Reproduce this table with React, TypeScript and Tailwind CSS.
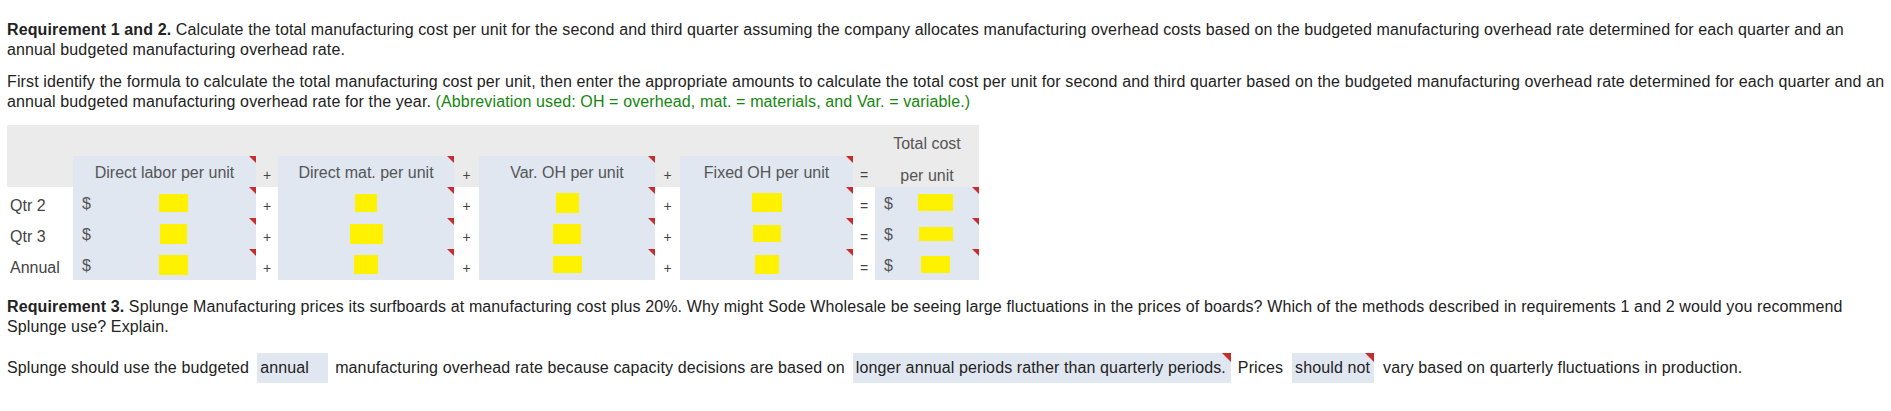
import React from "react";

const GREY = "bg-[#ebebeb]";
const BLUE = "bg-[#e0e7f1]";

function Tri({ size = 7 }: { size?: number }) {
  return size === 7 ? (
    <span className="absolute top-0 right-0 w-0 h-0 border-t-[7px] border-l-[7px] border-t-[#c62d2d] border-l-transparent" />
  ) : (
    <span className="absolute top-0 right-0 w-0 h-0 border-t-[9px] border-l-[9px] border-t-[#c62d2d] border-l-transparent" />
  );
}

function YBox({ w, h }: { w: number; h: number }) {
  return <span className="inline-block bg-[#fff200]" style={{ width: w, height: h }} />;
}

type Row = {
  label: string;
  dl: [number, number];
  dm: [number, number];
  vo: [number, number];
  fo: [number, number];
  tot: [number, number];
};

const rows: Row[] = [
  { label: "Qtr 2", dl: [29, 18], dm: [22, 18], vo: [23, 20], fo: [30, 19], tot: [35, 17] },
  { label: "Qtr 3", dl: [27, 20], dm: [33, 20], vo: [28, 20], fo: [28, 17], tot: [34, 14] },
  { label: "Annual", dl: [29, 20], dm: [24, 19], vo: [29, 17], fo: [24, 19], tot: [29, 17] },
];

function Op({ ch, grey }: { ch: string; grey?: boolean }) {
  return (
    <div className={`${grey ? GREY : "bg-white"} flex items-center justify-center pt-[8px] text-[14px] text-[#444]`}>
      {ch}
    </div>
  );
}

function HeadCell({ text }: { text: string }) {
  return (
    <div className={`${BLUE} relative flex items-center justify-center pt-[2px] text-[#555]`}>
      {text}
      <Tri />
    </div>
  );
}

function DataCell({ box, dollar }: { box: [number, number]; dollar?: boolean }) {
  return (
    <div className={`${BLUE} relative flex items-center`}>
      {dollar && <span className="pl-[9px] pt-[2px] text-[#555]">$</span>}
      <div className="flex-1 flex items-center justify-center">
        <YBox w={box[0]} h={box[1]} />
      </div>
      <Tri />
    </div>
  );
}

export default function App() {
  return (
    <div className="font-['Liberation_Sans',Arial,sans-serif] text-[16px] leading-[19.5px] tracking-[0.12px] text-[#222] pl-[7px] pr-[4px] pt-[20px] pb-[20px] bg-white">
      <p>
        <b>Requirement 1 and 2.</b> Calculate the total manufacturing cost per unit for the second and third quarter assuming
        the company allocates manufacturing overhead costs based on the budgeted manufacturing overhead rate determined for
        each quarter and an
        <br />
        annual budgeted manufacturing overhead rate.
      </p>
      <p className="mt-[13px]">
        First identify the formula to calculate the total manufacturing cost per unit, then enter the appropriate amounts to
        calculate the total cost per unit for second and third quarter based on the budgeted manufacturing overhead rate
        determined for each quarter and an annual budgeted manufacturing overhead rate for the year.{" "}
        <span className="text-[#15870f]">
          (Abbreviation used: OH = overhead, mat. = materials, and Var. = variable.)
        </span>
      </p>

      <div className="mt-[14px] tracking-normal grid grid-cols-[66px_183px_22px_176px_25px_176px_25px_173px_22px_104px] auto-rows-[31px]">
        {/* header row 1 */}
        <div className={`${GREY} col-span-9`} />
        <div className={`${GREY} flex items-center justify-center pt-[6px] text-[#555]`}>Total cost</div>

        {/* header row 2 */}
        <div className={GREY} />
        <HeadCell text="Direct labor per unit" />
        <Op ch="+" grey />
        <HeadCell text="Direct mat. per unit" />
        <Op ch="+" grey />
        <HeadCell text="Var. OH per unit" />
        <Op ch="+" grey />
        <HeadCell text="Fixed OH per unit" />
        <Op ch="=" grey />
        <div className={`${GREY} flex items-center justify-center pt-[8px] text-[#555]`}>per unit</div>

        {rows.map((r) => (
          <React.Fragment key={r.label}>
            <div className="flex items-center pl-[3px] pt-[6px] text-[#444]">{r.label}</div>
            <DataCell box={r.dl} dollar />
            <Op ch="+" />
            <DataCell box={r.dm} />
            <Op ch="+" />
            <DataCell box={r.vo} />
            <Op ch="+" />
            <DataCell box={r.fo} />
            <Op ch="=" />
            <DataCell box={r.tot} dollar />
          </React.Fragment>
        ))}
      </div>

      <p className="mt-[17px]">
        <b>Requirement 3.</b> Splunge Manufacturing prices its surfboards at manufacturing cost plus 20%. Why might Sode
        Wholesale be seeing large fluctuations in the prices of boards? Which of the methods described in requirements 1 and
        2 would you recommend
        <br />
        Splunge use? Explain.
      </p>

      <div className="mt-[17px] flex items-center h-[30px] whitespace-nowrap">
        <span>Splunge should use the budgeted</span>
        <span className={`${BLUE} ml-[8px] mr-[7px] w-[71px] h-[30px] flex items-center pl-[3px]`}>annual</span>
        <span>manufacturing overhead rate because capacity decisions are based on</span>
        <span className={`${BLUE} relative ml-[8px] mr-[7px] w-[378px] h-[30px] flex items-center pl-[3px]`}>
          longer annual periods rather than quarterly periods.
          <Tri size={9} />
        </span>
        <span>Prices</span>
        <span className={`${BLUE} relative ml-[9px] mr-[9px] w-[82px] h-[30px] flex items-center pl-[3px]`}>
          should not
          <Tri size={9} />
        </span>
        <span>vary based on quarterly fluctuations in production.</span>
      </div>
    </div>
  );
}
